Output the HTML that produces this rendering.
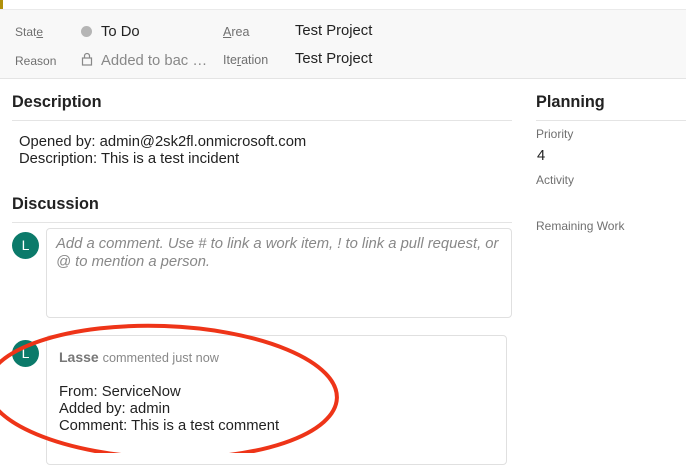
<!DOCTYPE html>
<html><head><style>
*{margin:0;padding:0;box-sizing:border-box}
body{width:686px;height:453px;overflow:hidden;background:#fff;font-family:"Liberation Sans",sans-serif;color:#222;position:relative}
.a{position:absolute;white-space:nowrap}
.lbl{font-size:12px;color:#707070}
.val{font-size:14.8px;color:#222}
h2{position:absolute;font-size:16.3px;font-weight:bold;color:#222}
.av{position:absolute;width:27px;height:27px;border-radius:50%;background:#0b7a6a;color:#fff;font-size:14px;text-align:center;line-height:27px}
</style></head><body>
<div class="a" style="left:0;top:0;width:3px;height:9px;background:#b0900a"></div>
<div class="a" style="left:0;top:9px;width:686px;height:70px;background:#f8f8f8;border-top:1px solid #eaeaea;border-bottom:1px solid #e4e4e4"></div>
<div class="a lbl" style="left:15px;top:25px"><span>Stat</span><span style="text-decoration:underline">e</span></div>
<div class="a lbl" style="left:15px;top:54px">Reason</div>
<div class="a" style="left:81px;top:26px;width:11px;height:11px;border-radius:50%;background:#b5b5b5"></div>
<div class="a val" style="left:101px;top:24px">To Do</div>
<svg class="a" style="left:81px;top:52px" width="12" height="14" viewBox="0 0 12 14"><rect x="1.5" y="6" width="9" height="7" fill="none" stroke="#888" stroke-width="1.2"/><path d="M3.5 6V4a2.5 2.5 0 0 1 5 0v2" fill="none" stroke="#888" stroke-width="1.2"/></svg>
<div class="a val" style="left:101px;top:53px;color:#888">Added to bac …</div>
<div class="a lbl" style="left:223px;top:25px;font-size:12.5px"><span style="text-decoration:underline">A</span>rea</div>
<div class="a lbl" style="left:223px;top:53px;font-size:12.5px">Ite<span style="text-decoration:underline">r</span>ation</div>
<div class="a val" style="left:295px;top:23px">Test Project</div>
<div class="a val" style="left:295px;top:51px">Test Project</div>
<h2 style="left:12px;top:93px">Description</h2>
<div class="a" style="left:12px;top:120px;width:500px;height:1px;background:#e4e4e4"></div>
<div class="a val" style="left:19px;top:134px;line-height:17px">Opened by: admin@2sk2fl.onmicrosoft.com<br>Description: This is a test incident</div>
<h2 style="left:12px;top:195px">Discussion</h2>
<div class="a" style="left:12px;top:222px;width:500px;height:1px;background:#e4e4e4"></div>
<h2 style="left:536px;top:93px">Planning</h2>
<div class="a" style="left:536px;top:120px;width:150px;height:1px;background:#e4e4e4"></div>
<div class="a lbl" style="left:536px;top:127px">Priority</div>
<div class="a val" style="left:537px;top:148px">4</div>
<div class="a lbl" style="left:536px;top:173px">Activity</div>
<div class="a lbl" style="left:536px;top:219px">Remaining Work</div>
<div class="av" style="left:12px;top:232px">L</div>
<div class="a" style="left:46px;top:228px;width:466px;height:90px;border:1px solid #e0e0e0;border-radius:4px"></div>
<div class="a" style="left:56px;top:235px;font-size:14.8px;font-style:italic;color:#888;line-height:18px">Add a comment. Use # to link a work item, ! to link a pull request, or<br>@ to mention a person.</div>
<div class="av" style="left:12px;top:340px">L</div>
<div class="a" style="left:46px;top:335px;width:461px;height:130px;border:1px solid #e0e0e0;border-radius:4px"></div>
<div class="a" style="left:59px;top:349px;font-size:14px;font-weight:bold;color:#777">Lasse <span style="font-weight:normal;font-size:12.7px;color:#888">commented just now</span></div>
<div class="a val" style="left:59px;top:384px;line-height:17px">From: ServiceNow<br>Added by: admin<br>Comment: This is a test comment</div>
<svg class="a" style="left:0;top:0" width="686" height="453"><ellipse cx="162" cy="392" rx="175" ry="66" transform="rotate(2 162 392)" fill="none" stroke="#ee3418" stroke-width="4"/></svg>
</body></html>
